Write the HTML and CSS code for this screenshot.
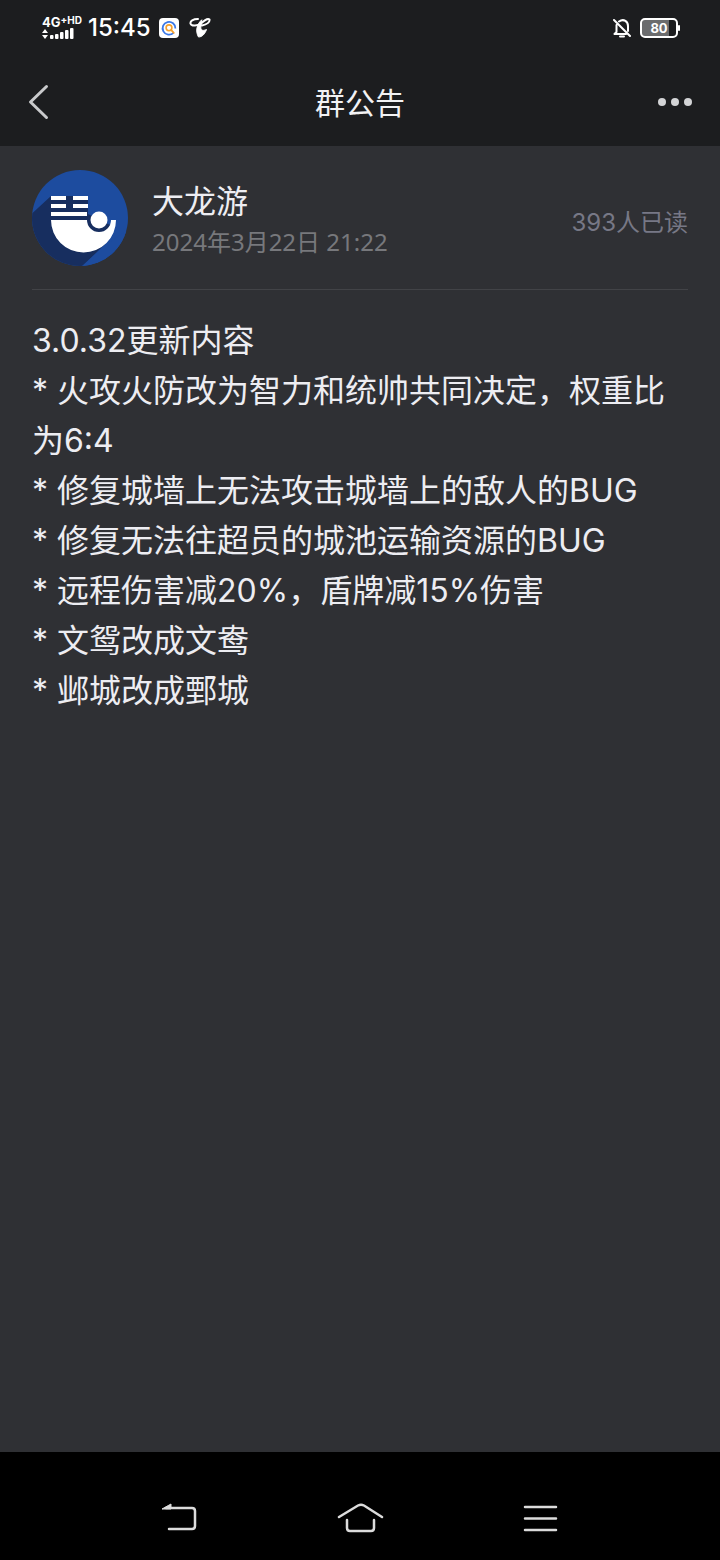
FILE: index.html
```html
<!DOCTYPE html>
<html lang="zh-CN">
<head>
<meta charset="utf-8">
<meta name="viewport" content="width=device-width, initial-scale=1">
<title>群公告</title>
<link rel="stylesheet" href="styles.css">
</head>
<body>
<div class="screen">
  <div class="status">
    <div class="status-group">
      <div class="network">
        <div class="network-type"><span>4G</span><span class="network-hd">+HD</span></div>
        <svg class="signal" viewBox="0 0 32 12" aria-hidden="true">
          <path d="M0 5l3-4 3 4zM0 7l3 4 3-4z"/>
          <rect x="8" y="7" width="3.500" height="4" rx="1"/>
          <rect x="13" y="6" width="3.500" height="5" rx="1"/>
          <rect x="18" y="4" width="3.500" height="7" rx="1"/>
          <rect x="23" y="2" width="3.500" height="9" rx="1"/>
          <rect x="28" y="0" width="3.500" height="11" rx="1"/>
        </svg>
      </div>
      <time class="clock">15:45</time>
      <svg class="app-icon" viewBox="0 0 20 20" aria-hidden="true">
        <rect width="20" height="20" rx="4" fill="#fff"/>
        <path d="M14.500 14.800A6.400 6.400 0 1 1 16.400 10.500" fill="none" stroke="#3a78e7" stroke-width="1.800"/>
        <circle cx="10" cy="9.800" r="2.900" fill="none" stroke="#f5a02c" stroke-width="1.600"/>
        <path d="M12.300 12.200l2.500 2.600" stroke="#f5a02c" stroke-width="1.800" stroke-linecap="round"/>
      </svg>
      <svg class="carrier" viewBox="0 0 22 22" aria-hidden="true" fill="none" stroke="#fff" stroke-linecap="round" stroke-linejoin="round">
        <path d="M9 2C4 2 1 4 1.500 6.500C2.500 10 9 8.500 12 6.500C15 3.500 19 1 20.500 2.500C21 5 18 7.500 13 8.500" stroke-width="2"/>
        <path d="M12.500 3C8 7 6 14 9.500 20C13 20 16 17 17.500 12.500C13.500 14.500 11 13 12 9Z" fill="#fff" stroke-width="1"/>
      </svg>
    </div>
    <div class="status-group">
      <svg class="mute" viewBox="0 0 20 20" aria-hidden="true">
        <path d="M7 3.500C12 0 16 4 16 8v5M4.500 7v7l-2 2H14M8 18.500h4M2 2l16 16" fill="none" stroke="#fff" stroke-width="2" stroke-linecap="round" stroke-linejoin="round"/>
      </svg>
      <div class="battery"><span>80</span></div>
    </div>
  </div>
  <header class="bar">
    <button class="bar-button" type="button" aria-label="返回">
      <svg class="back" viewBox="0 0 22 36"><path d="M18.500 2.500L2.500 18l16 15.500" fill="none" stroke="#c9cacc" stroke-width="3" stroke-linecap="round" stroke-linejoin="round"/></svg>
    </button>
    <h1 class="title">群公告</h1>
    <button class="bar-button bar-button-end" type="button" aria-label="更多">
      <svg class="more" viewBox="0 0 34 8" fill="#d3d4d6"><circle cx="4" cy="4" r="4"/><circle cx="17" cy="4" r="4"/><circle cx="30" cy="4" r="4"/></svg>
    </button>
  </header>
  <main class="notice">
    <div class="author">
      <svg class="avatar" viewBox="0 0 96 96" role="img" aria-label="大龙游">
        <defs><clipPath id="disc"><circle cx="48" cy="48" r="48"/></clipPath></defs>
        <g clip-path="url(#disc)">
          <rect width="96" height="96" fill="#1d4c9f"/>
          <path d="M19 26L-8 51V105H42L73 74L80 56L56 44V26Z" fill="#172e5f"/>
          <path d="M73 75L96 60V96H50Z" fill="#1d4c9f"/>
          <g fill="#fff">
            <path d="M19 26h15v4H19zM41 26h15v4H41zM19 34h15v4H19zM41 34h15v4H41zM19 42h36v4H19z"/>
            <path d="M19 50H55A12 12 0 0 0 79 50H84A32 32 0 0 1 19 50Z"/>
          </g>
          <circle cx="67" cy="50" r="8.500" fill="#fff"/>
        </g>
      </svg>
      <div class="author-text">
        <h2 class="author-name">大龙游</h2>
        <time class="date" datetime="2024-03-22T21:22">2024年3月22日 21:22</time>
      </div>
      <span class="reads">393人已读</span>
    </div>
    <div class="content">
      <p>3.0.32更新内容</p>
      <p>* 火攻火防改为智力和统帅共同决定，权重比为6:4</p>
      <p>* 修复城墙上无法攻击城墙上的敌人的BUG</p>
      <p>* 修复无法往超员的城池运输资源的BUG</p>
      <p>* 远程伤害减20%，盾牌减15%伤害</p>
      <p>* 文鸳改成文鸯</p>
      <p>* 邺城改成鄄城</p>
    </div>
  </main>
  <nav class="system" aria-label="系统导航">
    <button type="button" aria-label="返回"><svg viewBox="0 0 48 32"><path d="M10 6h26q3 0 3 3v15q0 3-3 3H13" fill="none" stroke="#dcdcdc" stroke-width="2.500" stroke-linecap="round"/><path d="M6 7l9-5v5z" fill="#dcdcdc" stroke="#dcdcdc"/></svg></button>
    <button type="button" aria-label="主页"><svg viewBox="0 0 48 32"><path d="M3 15L22 3.500q3-1.500 6 0L46 15M11 18v8q0 3 3 3h21q3 0 3-3v-8" fill="none" stroke="#dcdcdc" stroke-width="2.500" stroke-linecap="round"/></svg></button>
    <button type="button" aria-label="最近任务"><svg viewBox="0 0 48 32"><path d="M9 5h31M9 16.500h31M9 28h31" fill="none" stroke="#dcdcdc" stroke-width="2.500" stroke-linecap="round"/></svg></button>
  </nav>
</div>
</body>
</html>
```
FILE: styles.css
```css
* { box-sizing: border-box; }
body {
  margin: 0;
  background: #2f3034;
  color: #ededf2;
  font-family: Inter, "Noto Sans CJK SC", sans-serif;
}
h1, h2, p { margin: 0; font-weight: 400; }
svg { display: block; }
button { padding: 0; border: 0; background: none; cursor: pointer; }

.screen { min-height: 100vh; display: flex; flex-direction: column; }

.status {
  height: 56px;
  padding: 0 42px;
  display: flex;
  align-items: center;
  justify-content: space-between;
  background: #1c1d1f;
  color: #fff;
}
.status-group { display: flex; align-items: center; gap: 8px; }
.network { width: 38px; }
.network-type {
  display: flex;
  font-size: 13px;
  font-weight: 700;
  line-height: 12px;
}
.network-hd { font-size: 10px; line-height: 8px; }
.signal { width: 32px; height: 12px; fill: #fff; }
.clock { font-size: 24px; font-weight: 500; line-height: 32px; }
.app-icon { width: 20px; height: 20px; }
.carrier { width: 22px; height: 22px; margin-left: 2px; }
.mute { width: 20px; height: 20px; }
.battery {
  position: relative;
  width: 38px;
  height: 20px;
  border: 2px solid #fff;
  border-radius: 5px;
  background: linear-gradient(to right, #6b6c6e 80%, #1c1d1f 80%);
  font-size: 13px;
  font-weight: 700;
  line-height: 16px;
  text-align: center;
}
.battery::after {
  content: "";
  position: absolute;
  top: 5px;
  right: -4px;
  width: 2px;
  height: 6px;
  border-radius: 1px;
  background: #fff;
}

.bar {
  height: 90px;
  padding: 2px 28px 0;
  display: grid;
  grid-template-columns: 1fr auto 1fr;
  align-items: center;
  background: #1c1d1f;
}
.bar-button { justify-self: start; }
.bar-button-end { justify-self: end; }
.back { width: 22px; height: 36px; }
.more { width: 34px; height: 8px; }
.title { padding-top: 2px; font-size: 30px; line-height: 48px; color: #f2f2f4; }

.notice { flex: 1; padding: 24px 32px; }
.author {
  display: flex;
  align-items: center;
  gap: 24px;
  padding-bottom: 23px;
  border-bottom: 1px solid #424347;
}
.avatar { width: 96px; height: 96px; flex: none; }
.author-text { flex: 1; padding-top: 8px; }
.author-name { font-size: 32px; line-height: 40px; }
.date {
  display: block;
  font-family: "Noto Sans", "Noto Sans CJK SC", sans-serif;
  font-size: 24px;
  line-height: 40px;
  color: #77787c;
}
.reads { padding-top: 10px; font-size: 24px; line-height: 36px; color: #777886; }
.content { padding-top: 26px; font-size: 32px; line-height: 50px; }

.system {
  height: 108px;
  padding: 24px 90px 0;
  display: grid;
  grid-template-columns: repeat(3, 1fr);
  align-items: center;
  justify-items: center;
  background: #000;
}
.system svg { width: 48px; height: 32px; }
```
